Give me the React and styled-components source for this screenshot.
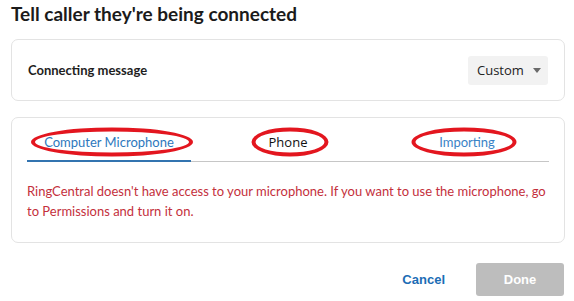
import React, { useState } from 'react';
import styled, { createGlobalStyle } from 'styled-components';

const Global = createGlobalStyle`
  body {
    margin: 0;
    background: #fff;
    font-family: Lato, "Noto Sans", sans-serif;
  }
`;

const Dialog = styled.div`
  width: 574px;
  height: 301px;
  box-sizing: border-box;
  padding: 2px 9px 0 11px;
  display: flex;
  flex-direction: column;
`;

const Title = styled.h2`
  margin: 0;
  font-size: 19px;
  line-height: 24px;
  font-weight: 700;
  color: #1b1b1b;
`;

const Card = styled.div`
  margin-top: ${p => p.top}px;
  border: 1px solid #e3e3e3;
  border-radius: 7px;
  box-sizing: border-box;
  height: ${p => p.h}px;
  padding: ${p => p.pad};
`;

const Row = styled.div`
  height: 100%;
  display: flex;
  align-items: center;
  justify-content: space-between;
`;

const Label = styled.span`
  font-size: 13px;
  font-weight: 700;
  color: #1e1e1e;
`;

const Select = styled.div`
  width: 80px;
  height: 29px;
  box-sizing: border-box;
  background: #f2f2f2;
  border-radius: 3px;
  display: flex;
  align-items: center;
  justify-content: space-between;
  padding: 0 7px 0 9px;
  font-family: "Open Sans", "Noto Sans", sans-serif;
  font-size: 13px;
  color: #222;
`;

const Caret = styled.span`
  width: 0;
  height: 0;
  border-left: 4px solid transparent;
  border-right: 4px solid transparent;
  border-top: 5px solid #6a6a6a;
`;

const Tabs = styled.div`
  display: grid;
  grid-template-columns: 164px 194px 1fr;
  border-bottom: 1px solid #c6c6c6;
  height: 32px;
`;

const Tab = styled.div`
  position: relative;
  display: flex;
  align-items: flex-start;
  justify-content: center;
  font-family: ${p => (p.plain ? '"Open Sans", "Noto Sans", sans-serif' : 'Lato, sans-serif')};
  font-size: 13px;
  line-height: 16px;
  color: ${p => p.color};
  border-bottom: 2px solid ${p => (p.active ? '#3374b0' : 'transparent')};
  margin-bottom: -1px;
  padding-top: 5px;
`;

const Text = styled.span`
  position: relative;
`;

const Ring = styled.span`
  position: absolute;
  left: 50%;
  top: 50%;
  width: ${p => p.w}px;
  height: 29px;
  transform: translate(calc(-50% + ${p => p.dx}px), -50%);
  border: 4px solid #e3161f;
  border-radius: 50%;
  box-sizing: border-box;
  pointer-events: none;
`;

const Message = styled.p`
  margin: 19px 0 0;
  font-size: 13px;
  line-height: 20px;
  color: #c4303c;
`;

const Footer = styled.div`
  margin-top: 20px;
  display: flex;
  justify-content: flex-end;
  align-items: center;
  gap: 29px;
  padding-right: 1px;
`;

const TextButton = styled.button`
  border: 0;
  background: none;
  font-family: "Liberation Sans", Arial, sans-serif;
  font-weight: 700;
  font-size: 13px;
  color: ${p => p.color};
  padding: 0 2px;
  cursor: pointer;
`;

const SolidButton = styled(TextButton)`
  width: 88px;
  height: 33px;
  background: #bdbdbd;
  border-radius: 3px;
`;

const tabs = [
  { name: 'Computer Microphone', color: '#2d78bd', ring: 162, dx: 3 },
  { name: 'Phone', color: '#111', ring: 77, dx: 2, plain: true },
  { name: 'Importing', color: '#3a83c6', ring: 105, dx: -3 },
];

export default function App() {
  const [active] = useState(0);
  return (
    <Dialog>
      <Global />
      <Title>Tell caller they're being connected</Title>
      <Card top={13} h={62} pad="0 16px">
        <Row>
          <Label>Connecting message</Label>
          <Select>
            Custom
            <Caret />
          </Select>
        </Row>
      </Card>
      <Card top={16} h={126} pad="11px 15px 0 15px">
        <Tabs>
          {tabs.map((t, i) => (
            <Tab key={t.name} color={t.color} active={i === active} plain={t.plain}>
              <Text>
                {t.name}
                <Ring w={t.ring} dx={t.dx} />
              </Text>
            </Tab>
          ))}
        </Tabs>
        <Message>
          RingCentral doesn't have access to your microphone. If you want to use the microphone, go to
          Permissions and turn it on.
        </Message>
      </Card>
      <Footer>
        <TextButton color="#1b6db5">Cancel</TextButton>
        <SolidButton color="#fff">Done</SolidButton>
      </Footer>
    </Dialog>
  );
}
